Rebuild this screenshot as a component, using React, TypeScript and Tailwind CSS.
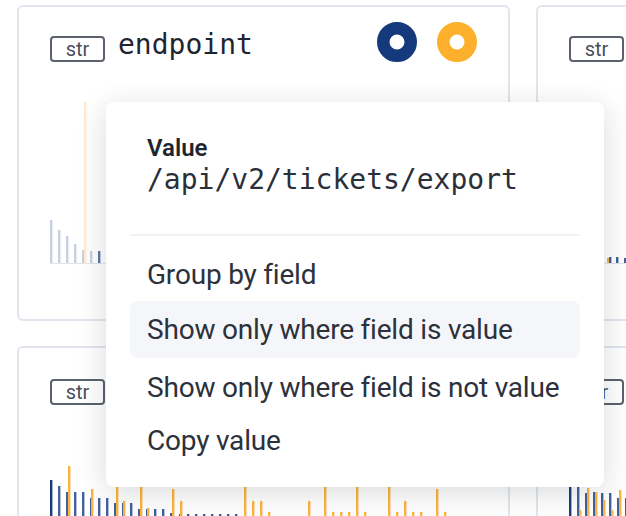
type Bar = { x: number; top: number; c: string }

const BLUE = '#41629e'
const NAVY = '#1b3c7c'
const ORANGE = '#fbb43f'

function Chart({ ox, oy, base, width, height, bars, axis }: { ox: number; oy: number; base: number; width: number; height: number; bars: Bar[]; axis?: boolean }) {
  return (
    <svg width={width} height={height} className="block overflow-visible">
      {bars.map((b, i) => (
        <rect key={i} x={b.x - ox - 1} y={b.top - oy} width={2.4} height={base - b.top} fill={b.c} />
      ))}
      {axis && <rect x={0} y={base - oy} width={width} height={1} fill="#e2e5eb" />}
    </svg>
  )
}

const topLeftBars: Bar[] = [
  { x: 51, top: 220, c: '#c8d1e3' },
  { x: 59, top: 230, c: '#c8d1e3' },
  { x: 67, top: 236, c: '#c8d1e3' },
  { x: 75, top: 244, c: '#c8d1e3' },
  { x: 83, top: 250, c: '#c8d1e3' },
  { x: 91, top: 251, c: '#c8d1e3' },
  { x: 99, top: 251, c: '#5c77a9' },
  { x: 85, top: 102, c: '#feeccb' },
  { x: 107, top: 254, c: '#c8d1e3' },
  { x: 115, top: 256, c: '#c8d1e3' },
]

const topRightBars: Bar[] = [
  { x: 608, top: 258, c: ORANGE },
  { x: 610, top: 257, c: BLUE },
  { x: 617, top: 257, c: BLUE },
  { x: 625, top: 258, c: BLUE },
]

const bottomLeftBars: Bar[] = [
  ...[
    [51, 480], [59, 486], [67, 492], [75, 492], [83, 492], [91, 498], [99, 498], [107, 498],
    [115, 503], [123, 503], [131, 503], [139, 509], [147, 509], [155, 509], [163, 509], [171, 513],
    [180, 514], [188, 514], [196, 514], [204, 514], [212, 514], [220, 514], [228, 514], [236, 514],
  ].map(([x, top], i) => ({ x, top, c: i === 0 ? NAVY : BLUE })),
  ...[
    [69, 466], [92, 489], [117, 487], [124, 501], [141, 487], [148, 508], [173, 489], [181, 501],
    [245, 487], [253, 501], [261, 501], [269, 512], [309, 501], [325, 487], [333, 512], [341, 512],
    [349, 512], [357, 487], [365, 512], [389, 487], [397, 512], [405, 501], [413, 512], [421, 512],
    [437, 489], [445, 512],
  ].map(([x, top]) => ({ x, top, c: ORANGE })),
]

const bottomRightBars: Bar[] = [
  ...[
    [570, 487], [578, 487], [586, 493], [594, 492], [602, 493], [610, 493], [618, 498], [626, 498],
  ].map(([x, top], i) => ({ x, top, c: i === 0 ? NAVY : BLUE })),
  ...[
    [580, 510], [588, 488], [596, 492], [604, 500], [612, 510], [620, 490],
  ].map(([x, top]) => ({ x, top, c: ORANGE })),
]

function Ring({ color }: { color: string }) {
  return (
    <svg width="40" height="40" viewBox="0 0 40 40">
      <circle cx="20" cy="20" r="13.75" fill="none" stroke={color} strokeWidth="12.5" />
    </svg>
  )
}

function Card({ name, top, chart }: { name?: string; top: string; chart: React.ReactNode }) {
  return (
    <div className={`overflow-hidden rounded-[6px] border-2 border-[#e1e5ee] bg-white px-[31px] ${top}`}>
      <div className="flex h-[40px] items-start justify-between">
        <div className="mt-[14px] flex items-start gap-[13px]">
          <span className="flex h-[26px] w-[55px] items-center justify-center rounded-[4px] border-2 border-[#5b616d] text-[20px] leading-none text-[#4a505c]">
            str
          </span>
          {name && (
            <span className="-mt-[5px] whitespace-nowrap font-['DejaVu_Sans_Mono',monospace] text-[28px] leading-[28px] text-[#1f2530]">
              {name}
            </span>
          )}
        </div>
        {name && (
          <div className="flex gap-[20px]">
            <Ring color="#153a7b" />
            <Ring color="#fcb02c" />
          </div>
        )}
      </div>
      {chart}
    </div>
  )
}

const items = [
  { label: 'Group by field', cls: 'h-[52px]' },
  { label: 'Show only where field is value', cls: 'h-[57px] bg-[#f5f6fa]' },
  { label: 'Show only where field is not value', cls: 'h-[60px]' },
  { label: 'Copy value', cls: 'h-[46px]' },
]

export default function App() {
  return (
    <div className="relative h-[516px] w-[626px] overflow-hidden bg-white font-['Roboto',sans-serif]">
      <div className="grid grid-cols-[493px_493px] grid-rows-[316px_316px] gap-x-[26px] gap-y-[25px] pl-[17px] pt-[5px]">
        <Card
          name="endpoint"
          top="pt-[15px]"
          chart={
            <div className="mt-[38px]">
              <Chart ox={50} oy={100} base={263} width={427} height={165} bars={topLeftBars} axis />
            </div>
          }
        />
        <Card
          top="pt-[15px]"
          chart={
            <div className="mt-[38px]">
              <Chart ox={569} oy={100} base={263} width={427} height={165} bars={topRightBars} axis />
            </div>
          }
        />
        <Card
          top="pt-[17px]"
          chart={
            <div className="mt-[55px]">
              <Chart ox={50} oy={460} base={530} width={427} height={70} bars={bottomLeftBars} />
            </div>
          }
        />
        <Card
          top="pt-[17px]"
          chart={
            <div className="mt-[55px]">
              <Chart ox={569} oy={460} base={530} width={427} height={70} bars={bottomRightBars} />
            </div>
          }
        />
      </div>

      <div className="absolute left-[106px] top-[102px] h-[385px] w-[498px] rounded-[8px] bg-white px-[24px] shadow-[0_6px_30px_rgba(17,24,39,0.16)]">
        <div className="px-[17px] pt-[32px]">
          <div className="text-[24px] font-semibold leading-[28px] text-[#1f2530]">Value</div>
          <div className="font-['DejaVu_Sans_Mono',monospace] text-[28px] leading-[36px] text-[#2a2f3a]">
            /api/v2/tickets/export
          </div>
        </div>
        <div className="mt-[36px] h-[2px] bg-[#f1f2f6]" />
        <ul className="mt-[13px]">
          {items.map((it) => (
            <li
              key={it.label}
              className={`flex items-center whitespace-nowrap rounded-[8px] px-[17px] text-[28px] leading-none tracking-[-0.2px] text-[#2c313c] ${it.cls}`}
            >
              {it.label}
            </li>
          ))}
        </ul>
      </div>
    </div>
  )
}
